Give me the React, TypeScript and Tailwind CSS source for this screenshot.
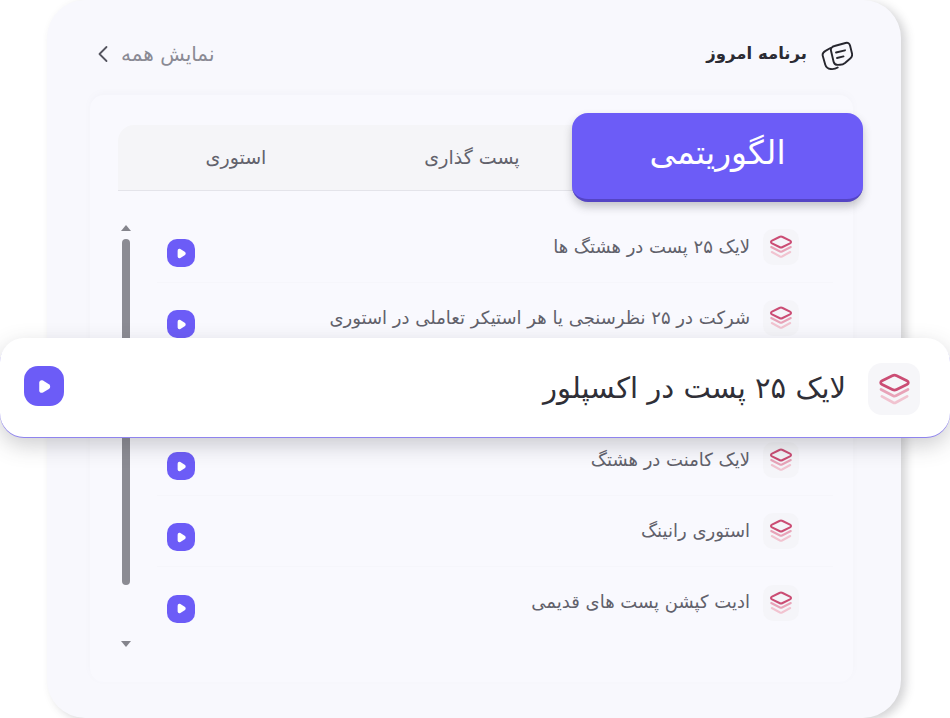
const FONT = "font-['DejaVu_Sans','Noto_Sans',sans-serif]";

function Stack({ size }: { size: number }) {
  return (
    <svg width={size} height={size} viewBox="0 0 24 24" fill="none" strokeLinejoin="round" strokeLinecap="round">
      <path d="M10.400 2 3 5.600C1.600 6.300 1.600 7.700 3 8.400l7.400 3.600c1 .5 2.200.5 3.200 0L21 8.400c1.400-.7 1.400-2.100 0-2.800L13.600 2c-1-.5-2.200-.5-3.200 0Z" stroke="#cb4d74" strokeWidth="2" />
      <path d="M2.200 12 11 16.500c.6.300 1.400.300 2 0L21.800 12" stroke="#e8a3b8" strokeWidth="2" />
      <path d="M2.800 17 11 21.500c.6.300 1.400.300 2 0L21.200 17" stroke="#f1c3d0" strokeWidth="2" />
    </svg>
  );
}

function Play({ big }: { big?: boolean }) {
  return (
    <div className={big ? "flex h-[40px] w-[40px] items-center justify-center rounded-[14px] bg-[#6c5cf7]" : "flex h-[28px] w-[28px] items-center justify-center rounded-[10px] bg-[#6c5cf7]"}>
      <svg width={big ? 15 : 11} height={big ? 15 : 11} viewBox="0 0 12 12">
        <path d="M1.800 3c0-1.700 1.500-2.600 3-1.800l4.700 2.900c1.400.9 1.400 2.900 0 3.800L4.800 10.800C3.300 11.600 1.800 10.700 1.800 9Z" fill="#fff" />
      </svg>
    </div>
  );
}

function Row({ text, last }: { text: string; last?: boolean }) {
  return (
    <div className={last ? "flex h-[71px] items-center justify-between pl-[10px] pr-[34px]" : "flex h-[71px] items-center justify-between border-b border-[#f6f6fb] pl-[10px] pr-[34px]"}>
      <div className="mt-[12px]">
        <Play />
      </div>
      <div className="flex items-center gap-[13px]">
        <span dir="rtl" className="mb-[2px] text-[18px] text-[#61616b]">{text}</span>
        <div className="flex h-[36px] w-[36px] items-center justify-center rounded-[10px] bg-[#f5f5f9]">
          <Stack size={24} />
        </div>
      </div>
    </div>
  );
}

export default function App() {
  return (
    <div className={`relative h-[718px] w-[950px] overflow-hidden bg-white ${FONT}`}>
      <div className="ml-[47px] flex h-[718px] w-[854px] flex-col rounded-[38px] bg-[#f8f8fd] pl-[43px] pr-[48px] pt-[38px] shadow-[5px_3px_10px_rgba(60,60,70,0.22)]">
        <div className="flex h-[32px] items-center justify-between pl-[6px]">
          <div className="flex items-center gap-[11px]">
            <svg width="14" height="20" viewBox="0 0 14 20" fill="none">
              <path d="M10.500 3 3.500 10l7 7" stroke="#55555f" strokeWidth="1.800" strokeLinecap="round" strokeLinejoin="round" />
            </svg>
            <span dir="rtl" className="text-[20px] text-[#8a8a94]">نمایش همه</span>
          </div>
          <div className="flex items-center gap-[14px]">
            <span dir="rtl" className="text-[16.500px] font-bold text-[#2b2b33]">برنامه امروز</span>
            <svg width="32" height="32" viewBox="0 0 32 32" fill="none" stroke="#26262e" strokeWidth="1.900" strokeLinecap="round" strokeLinejoin="round" className="mt-[6px]">
              <path d="M13.500 5 24.500 2c2.600-.7 4 .4 4.600 2.800L31 12.500c.5 2.300-.1 3.500-1.500 4.700L24 22c-1.500 1.200-3 1.700-5 1.800l-2 .1c-2.400.1-3.800-.9-4.400-3.200L10 9.800c-.6-2.400 1-4.200 3.500-4.800Z" />
              <path d="M9.500 7 4.500 9.800C2 11.200 1.200 13 1.800 15l2.400 8.500c.8 2.800 2.800 4.200 5.500 4.500 2.700.3 5-.2 7-1.500" />
              <path d="M15 11.500l9-2.200M16 17l6.500-1.600" />
            </svg>
          </div>
        </div>
        <div className="mt-[25px] h-[587px] rounded-[14px] bg-[#f9f9fe] pl-[28px] pt-[30px] shadow-[0_-2px_6px_rgba(120,120,160,0.04)]">
          <div className="relative flex h-[66px] w-[705px] rounded-t-[16px] border-b border-[#e4e4ea] bg-[#f5f5f8]">
            <div className="flex h-full w-[236px] items-center justify-center">
              <span dir="rtl" className="text-[19px] text-[#62626c]">استوری</span>
            </div>
            <div className="flex h-full w-[236px] items-center justify-center">
              <span dir="rtl" className="text-[19px] text-[#62626c]">پست گذاری</span>
            </div>
            <div className="absolute left-[454px] top-[-12px] flex h-[89px] w-[291px] items-center justify-center rounded-[16px] border-b-[3px] border-[#5444c4] bg-[#6c5cf7] pb-[6px] shadow-[0_5px_8px_rgba(60,60,70,0.28)]">
              <span dir="rtl" className="text-[33px] text-white">الگوریتمی</span>
            </div>
          </div>
          <div className="flex">
            <div className="flex w-[16px] flex-col items-center pt-[34px]">
              <div className="h-0 w-0 border-x-[5px] border-b-[6px] border-x-transparent border-b-[#85858d]" />
              <div className="mt-[8px] h-[346px] w-[8px] rounded-full bg-[#8b8b93]" />
              <div className="mt-[56px] h-0 w-0 border-x-[5px] border-t-[6px] border-x-transparent border-t-[#85858d]" />
            </div>
            <div className="ml-[23px] mt-[21px] w-[676px]">
              <Row text="لایک ۲۵ پست در هشتگ ها" />
              <Row text="شرکت در ۲۵ نظرسنجی یا هر استیکر تعاملی در استوری" />
              <div className="h-[71px]" />
              <Row text="لایک کامنت در هشتگ" />
              <Row text="استوری رانینگ" />
              <Row text="ادیت کپشن پست های قدیمی" last />
            </div>
          </div>
        </div>
      </div>
      <div className="absolute left-0 top-[338px] flex h-[99px] w-[950px] items-center justify-between rounded-[24px] bg-white pl-[24px] pr-[30px] shadow-[0_1px_0_#8f84ee,0_8px_22px_rgba(60,60,70,0.26)]">
        <div className="mb-[3px]">
          <Play big />
        </div>
        <div className="mt-[3px] flex items-center gap-[22px]">
          <span dir="rtl" className="text-[29px] text-[#2f2f37]">لایک ۲۵ پست در اکسپلور</span>
          <div className="flex h-[52px] w-[52px] items-center justify-center rounded-[14px] bg-[#f6f6f9]">
            <Stack size={33} />
          </div>
        </div>
      </div>
    </div>
  );
}
